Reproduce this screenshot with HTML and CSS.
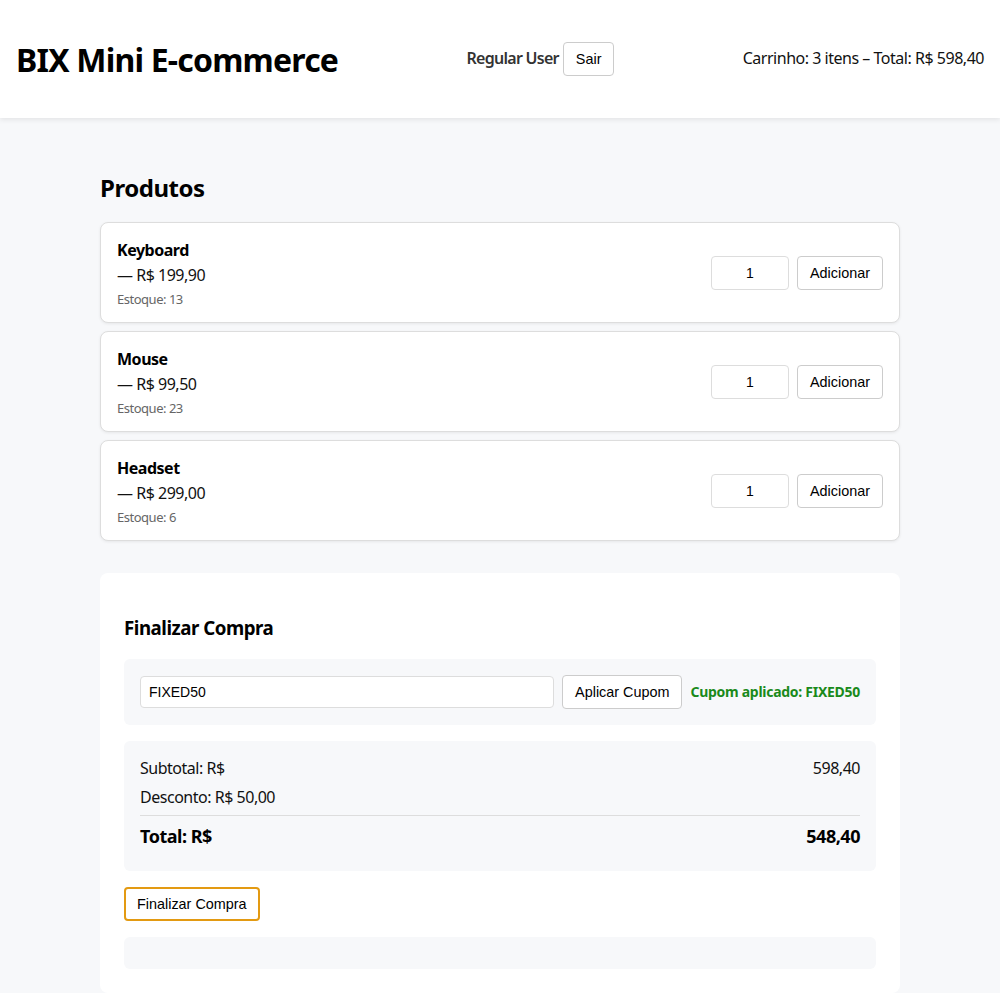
FILE: index.html
```html
<!DOCTYPE html>
<html lang="pt-BR">
<head>
<meta charset="utf-8">
<title>BIX Mini E-commerce</title>
<link rel="stylesheet" href="styles.css">
</head>
<body>
<header class="topbar">
  <h1 class="brand">BIX Mini E-commerce</h1>
  <div class="user">
    <span class="user-name">Regular User</span>
    <button class="btn">Sair</button>
  </div>
  <div class="cart-info">Carrinho: 3 itens – Total: R$ 598,40</div>
</header>

<main class="main">
  <div class="container">
    <h2 class="section-title">Produtos</h2>
    <div class="products">
      <div class="product-card">
        <div class="product-info">
          <div class="product-name">Keyboard</div>
          <div class="product-price">— R$ 199,90</div>
          <div class="product-stock">Estoque: 13</div>
        </div>
        <div class="product-actions">
          <input class="qty" type="number" value="1">
          <button class="btn">Adicionar</button>
        </div>
      </div>
      <div class="product-card">
        <div class="product-info">
          <div class="product-name">Mouse</div>
          <div class="product-price">— R$ 99,50</div>
          <div class="product-stock">Estoque: 23</div>
        </div>
        <div class="product-actions">
          <input class="qty" type="number" value="1">
          <button class="btn">Adicionar</button>
        </div>
      </div>
      <div class="product-card">
        <div class="product-info">
          <div class="product-name">Headset</div>
          <div class="product-price">— R$ 299,00</div>
          <div class="product-stock">Estoque: 6</div>
        </div>
        <div class="product-actions">
          <input class="qty" type="number" value="1">
          <button class="btn">Adicionar</button>
        </div>
      </div>
    </div>

    <section class="checkout">
      <h3 class="checkout-title">Finalizar Compra</h3>
      <div class="coupon-box">
        <input class="coupon-input" type="text" value="FIXED50">
        <button class="btn">Aplicar Cupom</button>
        <span class="coupon-ok">Cupom aplicado: FIXED50</span>
      </div>
      <div class="summary">
        <div class="summary-row"><span>Subtotal: R$</span><span>598,40</span></div>
        <div class="summary-row summary-discount"><span>Desconto: R$ 50,00</span></div>
        <div class="summary-row summary-total"><span>Total: R$</span><span>548,40</span></div>
      </div>
      <button class="btn btn-finish">Finalizar Compra</button>
      <div class="message-box"></div>
    </section>
  </div>
</main>
</body>
</html>
```
FILE: styles.css
```css
* { box-sizing: border-box; }

body {
  margin: 0;
  font-family: "Noto Sans", "Open Sans", sans-serif;
  letter-spacing: -0.03em;
  line-height: 1.33;
  color: #111;
  background: #f7f8fa;
}

.topbar {
  display: flex;
  align-items: center;
  justify-content: space-between;
  height: 118px;
  padding: 0 16px;
  background: #fff;
  box-shadow: 0 2px 5px rgba(0, 0, 0, 0.08);
  position: relative;
}

.brand {
  margin: 3px 0 0;
  font-size: 32px;
  font-weight: 700;
  line-height: 42.5px;
  letter-spacing: -0.025em;
  color: #000;
}

.user {
  display: flex;
  align-items: center;
  gap: 4px;
}

.user-name {
  font-weight: 600;
  font-size: 16px;
  letter-spacing: -0.045em;
  color: #333;
}

.cart-info {
  font-size: 16px;
  color: #111;
}

.btn {
  font-family: "Liberation Sans", Arial, sans-serif;
  letter-spacing: 0;
  font-size: 14.4px;
  line-height: 16px;
  padding: 8px 12px;
  background: #fff;
  color: #000;
  border: 1px solid #ccc;
  border-radius: 4px;
}

.main {
  padding: 32px 0 40px;
}

.container {
  width: 800px;
  margin: 0 auto;
}

.section-title {
  margin: 22px 0 18px;
  font-size: 24px;
  line-height: 32px;
  font-weight: 700;
  color: #000;
}

.products {
  display: flex;
  flex-direction: column;
  gap: 8.5px;
}

.product-card {
  display: flex;
  align-items: center;
  justify-content: space-between;
  padding: 17px 16px 15px;
  background: #fff;
  border: 1px solid #ddd;
  border-radius: 8px;
  box-shadow: 0 1px 3px rgba(0, 0, 0, 0.07);
}

.product-name {
  font-weight: 700;
  font-size: 16px;
  color: #000;
  margin-bottom: 4px;
}

.product-price {
  font-size: 16px;
  color: #111;
}

.product-stock {
  margin-top: 4px;
  font-size: 13px;
  line-height: 16px;
  color: #666;
}

.product-actions {
  display: flex;
  align-items: center;
  gap: 8px;
}

.qty {
  width: 78px;
  height: 34px;
  padding: 0 8px;
  font-family: "Liberation Sans", Arial, sans-serif;
  font-size: 14px;
  text-align: center;
  border: 1px solid #ddd;
  border-radius: 4px;
  background: #fff;
  color: #000;
  -moz-appearance: textfield;
}

.qty::-webkit-outer-spin-button,
.qty::-webkit-inner-spin-button {
  -webkit-appearance: none;
  margin: 0;
}

.checkout {
  margin-top: 32px;
  padding: 24px;
  background: #fff;
  border-radius: 8px;
}

.checkout-title {
  margin: 18.72px 0;
  font-size: 18.72px;
  line-height: 25px;
  font-weight: 700;
  color: #000;
}

.coupon-box {
  display: flex;
  align-items: center;
  gap: 8px;
  padding: 16px;
  background: #f7f8fa;
  border-radius: 6px;
}

.coupon-input {
  flex: 1;
  height: 32px;
  padding: 0 8px;
  font-family: "Liberation Sans", Arial, sans-serif;
  font-size: 14px;
  color: #000;
  border: 1px solid #ddd;
  border-radius: 4px;
  background: #fff;
}

.coupon-ok {
  font-size: 14px;
  font-weight: 700;
  letter-spacing: -0.02em;
  color: #1a8a1a;
}

.summary {
  margin-top: 16px;
  padding: 17px 16px 22px;
  background: #f7f8fa;
  border-radius: 6px;
}

.summary-row {
  display: flex;
  justify-content: space-between;
  font-size: 16px;
  color: #111;
  margin-bottom: 8px;
}

.summary-discount {
  margin-bottom: 6px;
}

.summary-total {
  margin-bottom: 0;
  padding-top: 9px;
  border-top: 1px solid #ddd;
  font-size: 18px;
  font-weight: 700;
  color: #000;
}

.btn-finish {
  margin-top: 16px;
  padding: 7px 11px;
  line-height: 16px;
  border: 2px solid #e39a12;
}

.message-box {
  margin-top: 16px;
  height: 32px;
  background: #f7f8fa;
  border-radius: 6px;
}
```
